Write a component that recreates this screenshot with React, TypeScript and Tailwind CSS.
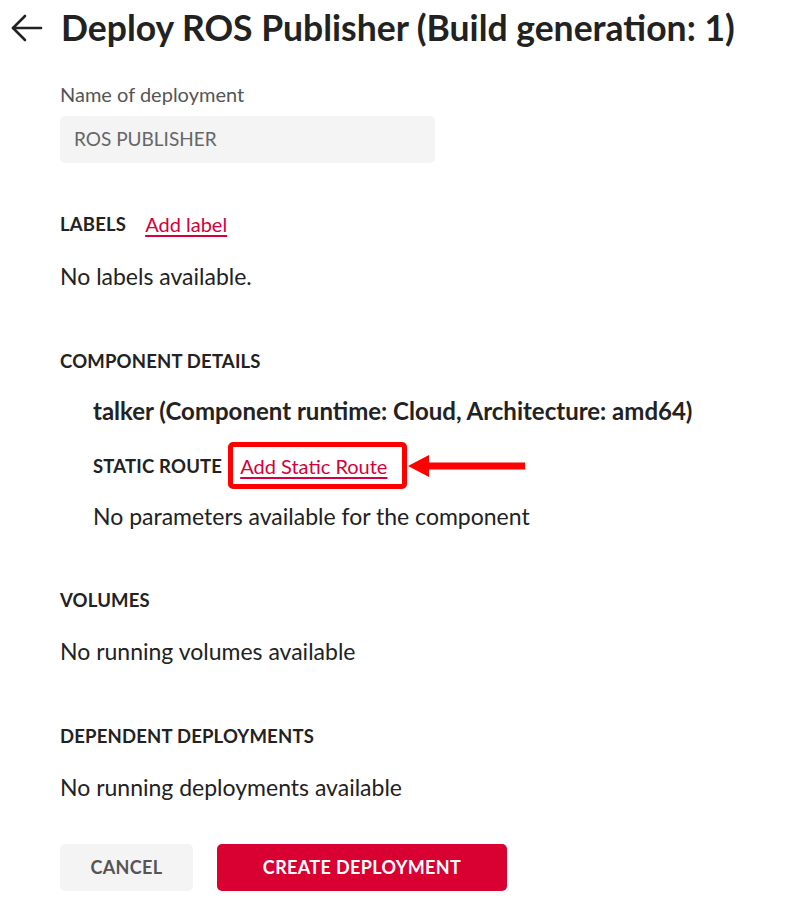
import React from "react";

const font = { fontFamily: "Lato, 'Liberation Sans', sans-serif" };

function SectionTitle({ children }: { children: React.ReactNode }) {
  return (
    <h3 className="text-[18.5px] leading-[24px] font-bold uppercase tracking-[0.01em] text-[#222]">
      {children}
    </h3>
  );
}

function Note({ children }: { children: React.ReactNode }) {
  return <p className="text-[23px] leading-[30px] text-[#222]">{children}</p>;
}

const BackArrow = () => (
  <svg
    width="32"
    height="30"
    viewBox="0 0 32 30"
    fill="none"
    stroke="#222"
    strokeWidth="2.6"
    strokeLinecap="round"
    strokeLinejoin="round"
  >
    <line x1="2" y1="15" x2="30" y2="15" />
    <polyline points="14,3 2,15 14,27" />
  </svg>
);

export default function App() {
  return (
    <div className="min-h-screen bg-white text-[#222]" style={font}>
      {/* Header */}
      <div className="flex items-center h-[56px] pl-[11px]">
        <BackArrow />
        <h1 className="ml-[18px] text-[35.5px] font-bold leading-[56px] text-[#222]">
          Deploy ROS Publisher (Build generation: 1)
        </h1>
      </div>

      <div className="pl-[60px] pt-[26px]">
        {/* Name field */}
        <label className="block text-[20px] leading-[24px] text-[#555]">
          Name of deployment
        </label>
        <div className="mt-[10px] w-[375px] h-[47px] bg-[#f4f4f4] rounded-[5px] flex items-center px-[14px] text-[19px] text-[#666]">
          ROS PUBLISHER
        </div>

        {/* Labels */}
        <div className="mt-[49px] flex items-center gap-[19px]">
          <SectionTitle>Labels</SectionTitle>
          <a href="#" className="text-[20px] leading-[24px] text-[#d6003a] underline underline-offset-[3px]">
            Add label
          </a>
        </div>
        <div className="mt-[25px]">
          <Note>No labels available.</Note>
        </div>

        {/* Component details */}
        <div className="mt-[58px]">
          <SectionTitle>Component Details</SectionTitle>
        </div>
        <div className="pl-[33px]">
          <p className="mt-[23px] text-[24px] leading-[30px] font-bold text-[#222]">
            talker (Component runtime: Cloud, Architecture: amd64)
          </p>
          <div className="mt-[16px] flex items-center h-[47px]">
            <SectionTitle>Static Route</SectionTitle>
            <div className="ml-[6px] h-[47px] border-[5px] border-[#ff0000] rounded-[5px] flex items-center pl-[7px] pr-[15px]">
              <a href="#" className="text-[20px] leading-[24px] text-[#d6003a] underline underline-offset-[3px]">
                Add Static Route
              </a>
            </div>
            <svg width="120" height="30" viewBox="0 0 120 30">
              <polygon points="1,15 22,4 22,26" fill="#ff0000" />
              <rect x="18" y="11.5" width="100" height="7" fill="#ff0000" />
            </svg>
          </div>
          <div className="mt-[12px]">
            <Note>No parameters available for the component</Note>
          </div>
        </div>

        {/* Volumes */}
        <div className="mt-[57px]">
          <SectionTitle>Volumes</SectionTitle>
        </div>
        <div className="mt-[24px]">
          <Note>No running volumes available</Note>
        </div>

        {/* Dependent deployments */}
        <div className="mt-[58px]">
          <SectionTitle>Dependent Deployments</SectionTitle>
        </div>
        <div className="mt-[24px]">
          <Note>No running deployments available</Note>
        </div>

        {/* Actions */}
        <div className="mt-[42px] flex gap-[24px]">
          <button className="w-[133px] h-[47px] bg-[#f4f4f4] rounded-[5px] text-[18px] font-bold uppercase text-[#555] tracking-[0.02em]">
            Cancel
          </button>
          <button className="w-[290px] h-[47px] bg-[#d90032] rounded-[5px] text-[18px] font-bold uppercase text-white tracking-[0.02em]">
            Create Deployment
          </button>
        </div>
      </div>
    </div>
  );
}
